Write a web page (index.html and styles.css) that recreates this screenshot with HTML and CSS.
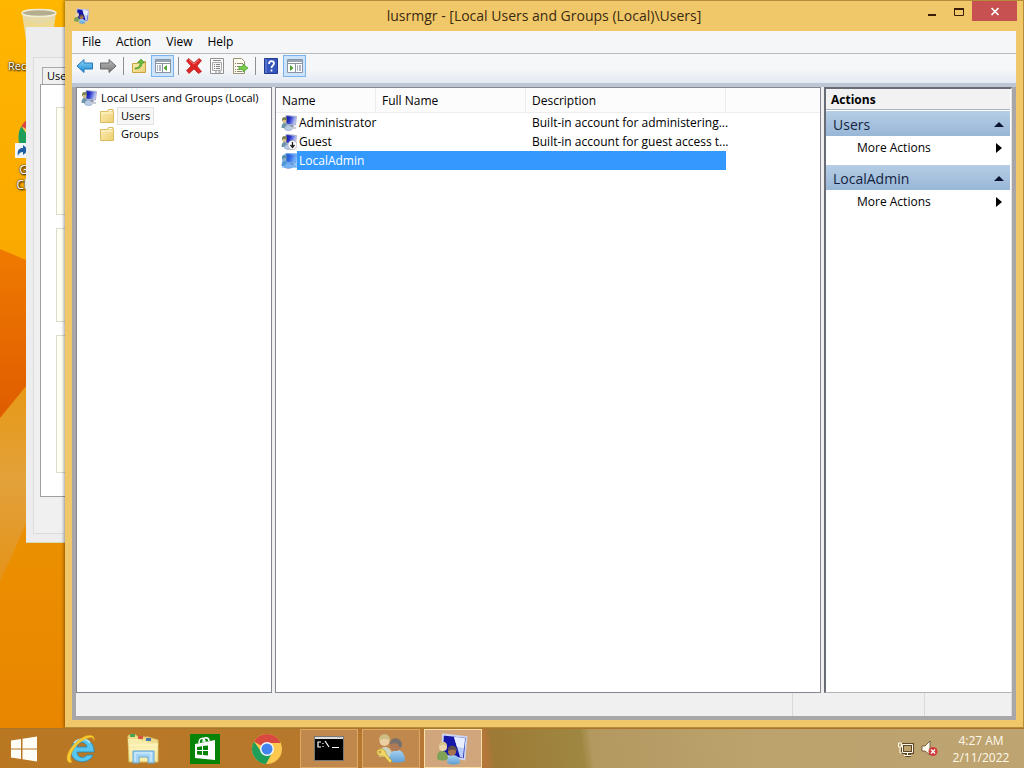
FILE: index.html
```html
<!DOCTYPE html>
<html lang="en">
<head>
<meta charset="utf-8">
<title>lusrmgr - [Local Users and Groups (Local)\Users]</title>
<link rel="stylesheet" href="styles.css">
</head>
<body>
<svg class="defs" aria-hidden="true">
  <defs>
    <linearGradient id="screen" x1="0" x2="1" y1="0" y2="0.3"><stop offset="0" stop-color="#0c0c9c"/><stop offset="0.45" stop-color="#2a35c8"/><stop offset="1" stop-color="#c3d2fa"/></linearGradient>
    <linearGradient id="gold" x1="0" x2="1" y1="0" y2="1"><stop offset="0" stop-color="#fbeeb4"/><stop offset="1" stop-color="#edcf72"/></linearGradient>
    <linearGradient id="shirt" x1="0" x2="0" y1="0" y2="1"><stop offset="0" stop-color="#a9d3f2"/><stop offset="1" stop-color="#5f9fd4"/></linearGradient>
    <linearGradient id="blue" x1="0" x2="0" y1="0" y2="1"><stop offset="0" stop-color="#8fd6f8"/><stop offset="1" stop-color="#1887d2"/></linearGradient>
    <linearGradient id="grey" x1="0" x2="0" y1="0" y2="1"><stop offset="0" stop-color="#bdbdbd"/><stop offset="1" stop-color="#777"/></linearGradient>
    <symbol id="user" viewBox="0 0 16 16">
      <path d="M5 .500 15.500 1.500 14.500 10 5 9Z" fill="url(#screen)" stroke="#a9b0c8"/>
      <path d="M8 10h4l1 2H8Z" fill="#8c93a8"/>
      <circle cx="3.500" cy="4.500" r="2.500" fill="#7a8450"/>
      <path d="M2 5h3v3H2Z" fill="#d8bd8c"/>
      <path d="M.500 13C.500 9 2 8 3.500 8s3.500 2 3.500 5Z" fill="#6f96a8"/>
      <path d="M3.500 14c0-3 2-4 4-4s4 2 4 4c-2 2-6 2-8 0Z" fill="#b7cbe6" stroke="#7c95bd" stroke-width=".6"/>
      <path d="M9 12h6v2H9Z" fill="#c8ccd6"/>
    </symbol>
    <symbol id="group" viewBox="0 0 32 32">
      <path d="M6 1.500 29.500 4 27.500 26.500 5 22Z" fill="#1616a8" stroke="#cdd6f0" stroke-width="1.800"/>
      <path d="M17 4 28 5 26 25 23 24Z" fill="#b9cdfa"/><path d="M17 4 28 5 27 15 20 14Z" fill="#e6eeff"/>
      <path d="M0 26c0-5 1-8 5-8s6 3 6 8c-3 2-8 2-11 0Z" fill="#7fa356"/>
      <circle cx="6" cy="14" r="4" fill="#ecd6ae"/><path d="M2 14c-1-7 9-7 8 0-3-3-5-3-8 0Z" fill="#d5c58c"/>
      <path d="M10 30c0-5 2-8 6-8s7 3 7 8c-4 2-9 2-13 0Z" fill="url(#shirt)"/>
      <circle cx="15" cy="18.500" r="4" fill="#a87350"/><path d="M11 18c-1-7 9-7 9 0-3-2-6-2-9 0Z" fill="#5e5048"/>
    </symbol>
    <symbol id="folder" viewBox="0 0 16 16">
      <path d="M1.500 3.500h7l1-2h4.500v2h.5v11h-13Z" fill="url(#gold)" stroke="#dcbb62"/>
      <path d="M2 5h12" stroke="#fff6cf"/><path d="M10 2.500h3" stroke="#fff"/>
    </symbol>
    <symbol id="chrome" viewBox="0 0 32 32">
      <circle cx="16" cy="16" r="15" fill="#fbc950"/>
      <path d="M16 16 3 8.500A15 15 0 0 1 29 8.500L29 10H16Z" fill="#d9493f"/>
      <path d="M3 8.500A15 15 0 0 0 15 31L21 20Q16 25 11 20Z" fill="#1f9e5a"/>
      <circle cx="16" cy="16" r="7" fill="#f3f6fa"/><circle cx="16" cy="16" r="5.500" fill="#4285ee"/>
    </symbol>
  </defs>
</svg>

<main class="desktop">
  <svg class="wallpaper" viewBox="0 0 1024 768" preserveAspectRatio="none" aria-hidden="true">
    <defs>
      <linearGradient id="sky" x1="0" x2="0" y1="0" y2="1"><stop offset="0" stop-color="#ffb600"/><stop offset=".35" stop-color="#faa800"/><stop offset=".65" stop-color="#eb9200"/><stop offset="1" stop-color="#e88400"/></linearGradient>
      <linearGradient id="fold" x1="0" x2="0" y1="0" y2="1"><stop offset="0" stop-color="#ef7a00"/><stop offset="1" stop-color="#df5c00"/></linearGradient>
      <linearGradient id="ray" x1="0" x2="0" y1="0" y2="1"><stop offset="0" stop-color="#eb9400"/><stop offset=".6" stop-color="#e2a13a"/><stop offset="1" stop-color="#e59319"/></linearGradient>
    </defs>
    <path d="M0 0H1024V768H0Z" fill="url(#sky)"/>
    <path d="M0 418 70 330V425L0 582Z" fill="url(#ray)"/>
    <path d="M0 249 26 260 70 282V332L0 418Z" fill="url(#fold)"/>
  </svg>

  <div class="shortcut shortcut-bin">
    <svg width="40" height="48" viewBox="0 0 40 48" aria-hidden="true"><path d="M3 5 9 46h22l6-41Z" fill="#e6d9a5"/><path d="M5 12 20 16 35 12 31 46H9Z" fill="#f0d98a" opacity=".7"/><ellipse cx="20" cy="5" rx="17" ry="3.500" fill="#b4ad8e" stroke="#efecd8" stroke-width="1.500"/></svg>
    <span>Rec</span>
  </div>
  <div class="shortcut shortcut-chrome">
    <svg width="48" height="48" viewBox="0 0 48 48" aria-hidden="true"><use href="#chrome" x="2" y="1" width="46" height="46"/><path d="M0 30h16v15H0Z" fill="#f2f5f8"/><path d="M3 43c-1-6 1-8 5-8v-3l6 5-6 5v-3c-3 0-4 1-5 4Z" fill="#1e5ea4"/></svg>
    <span>Google Chrome</span>
  </div>

  <section class="back-window" aria-label="System properties">
    <div class="back-body">
      <span class="back-tab">Use</span>
      <div class="back-page">
        <div class="back-box"></div>
        <div class="back-box"></div>
        <div class="back-box back-box-tall"></div>
      </div>
    </div>
  </section>

  <section class="window" aria-label="lusrmgr">
    <header class="titlebar">
      <svg class="title-icon" width="16" height="16" aria-hidden="true"><use href="#group"/></svg>
      <h1 class="title">lusrmgr - [Local Users and Groups (Local)\Users]</h1>
      <div class="controls">
        <button class="control" aria-label="Minimize"><svg width="10" height="10"><path d="M1 7h8v2H1Z" fill="#3b1d0a"/></svg></button>
        <button class="control" aria-label="Maximize"><svg width="12" height="10"><path d="M1.500 1.500h9v7h-9Z" fill="none" stroke="#3b1d0a"/><path d="M1 2h10" stroke="#3b1d0a" stroke-width="2"/></svg></button>
        <button class="control control-close" aria-label="Close"><svg width="10" height="9"><path d="m1.500 1 7 7m0-7-7 7" stroke="#fff" stroke-width="1.700"/></svg></button>
      </div>
    </header>

    <div class="client">
      <nav class="menubar" aria-label="Menu">
        <button>File</button><button>Action</button><button>View</button><button>Help</button>
      </nav>
      <div class="toolbar" role="toolbar" aria-label="Tools">
        <button class="tool" aria-label="Back"><svg width="18" height="16"><path d="M1 8 8 1.500V5h8.500v6H8v3.500Z" fill="url(#blue)" stroke="#2679b8"/></svg></button>
        <button class="tool" aria-label="Forward"><svg width="18" height="16"><path d="M17 8 10 1.500V5H1.500v6H10v3.500Z" fill="url(#grey)" stroke="#686868"/></svg></button>
        <i class="divider"></i>
        <button class="tool" aria-label="Up one level"><svg width="16" height="16"><path d="M1.500 5.500h5l1-2h7v11h-13Z" fill="url(#gold)" stroke="#c9a340"/><path d="M4 10c4 0 5-3 5-5H6.500L10 1l3.500 4H11c0 4-3 6-7 6Z" fill="#69bd3c" stroke="#3d8c24" stroke-width=".6"/></svg></button>
        <button class="tool tool-on" aria-label="Show console tree" aria-pressed="true"><svg width="18" height="16"><path d="M1.500 1.500h15v13h-15Z" fill="#fff" stroke="#8a93a0"/><path d="M2 2h14v2H2Z" fill="#9aa5b4"/><path d="M2 5.500h14M8.500 6v8" stroke="#8a93a0"/><path d="M3 8h4M3 10h4M3 12h4" stroke="#5f6f88" stroke-dasharray="1 1 2"/><path d="M13 7v6l-3.500-3Z" fill="#4aa12f"/></svg></button>
        <i class="divider"></i>
        <button class="tool" aria-label="Delete"><svg width="18" height="18"><path d="M3.500 1.500 9 6l5-4.500 2.500 2L12 9l4.500 5.500-3 2L9 12l-5 4.500-2.500-3L6 9 1.500 4Z" fill="#df2424" stroke="#b51c1c" stroke-width=".7"/><path d="m4 3 5 4 5-4" fill="none" stroke="#f27c74"/></svg></button>
        <button class="tool" aria-label="Properties"><svg width="16" height="16"><path d="M1.500.5h13v15h-13Z" fill="#fff" stroke="#909090"/><path d="M3.500 4.500h9v8h-9Z" fill="#f4f4f4" stroke="#aaa"/><path d="M4 2.500h8M5 6.500h1m1 0h4M5 8.500h1m1 0h4M5 10.500h1m1 0h4M6 14h2m1 0h3" stroke="#858585"/></svg></button>
        <button class="tool" aria-label="Export list"><svg width="17" height="16"><path d="M1.500.5h8l3 3v12h-11Z" fill="#fffdf1" stroke="#9b9473"/><path d="M3 5.500h1m1 0h6M3 8.500h1m1 0h2M3 11.500h1m1 0h2M3 13.500h1m1 0h5" stroke="#8d886a"/><path d="M7 8.500h4V6l5 4-5 4v-2.500H7Z" fill="#79cf4c" stroke="#41962a" stroke-width=".7"/></svg></button>
        <i class="divider"></i>
        <button class="tool" aria-label="Help"><svg width="14" height="16"><path d="M.5.500h13v15H.5Z" fill="#3557bd" stroke="#223a8c"/><path d="M2 1v14" stroke="#7990dc"/><path d="M5 6c0-4 5-3.500 5-.5 0 2-2.500 2-2.500 4.500M7.500 11.500v2" fill="none" stroke="#fff" stroke-width="1.700"/></svg></button>
        <button class="tool tool-on" aria-label="Show action pane" aria-pressed="true"><svg width="18" height="16"><path d="M1.500 1.500h15v13h-15Z" fill="#fff" stroke="#8a93a0"/><path d="M2 2h14v2H2Z" fill="#9aa5b4"/><path d="M2 5.500h14M9.500 6v8" stroke="#8a93a0"/><path d="M11 8h4M11 10h4M11 12h4" stroke="#5f6f88" stroke-dasharray="1 1 2"/><path d="M4 7v6l3.500-3Z" fill="#4aa12f"/></svg></button>
      </div>

      <div class="panes">
        <aside class="pane tree">
          <ul>
            <li class="node"><svg width="16" height="16" aria-hidden="true"><use href="#user"/></svg><span>Local Users and Groups (Local)</span></li>
            <li class="node node-child"><svg width="16" height="16" aria-hidden="true"><use href="#folder"/></svg><span class="node-current">Users</span></li>
            <li class="node node-child"><svg width="16" height="16" aria-hidden="true"><use href="#folder"/></svg><span>Groups</span></li>
          </ul>
        </aside>

        <div class="pane list">
          <table class="users">
            <colgroup><col class="col-name"><col class="col-full"><col class="col-desc"><col></colgroup>
            <thead><tr><th>Name</th><th>Full Name</th><th>Description</th><th class="th-rest"></th></tr></thead>
            <tbody>
              <tr><td class="name-cell"><div class="name"><svg width="16" height="16" aria-hidden="true"><use href="#user"/></svg><span>Administrator</span></div></td><td></td><td>Built-in account for administering...</td><td></td></tr>
              <tr><td class="name-cell"><div class="name"><svg width="16" height="16" aria-hidden="true"><use href="#user"/><circle cx="11.500" cy="11" r="4.500" fill="#fff" stroke="#9a9a9a" stroke-width=".6"/><path d="M11.500 8v5M9.500 11l2 2.500 2-2.500" fill="none" stroke="#222" stroke-width="1.300"/></svg><span>Guest</span></div></td><td></td><td>Built-in account for guest access t...</td><td></td></tr>
              <tr class="selected"><td class="name-cell"><div class="name"><svg width="16" height="16" aria-hidden="true"><use href="#user"/><path d="M5 0h11v15H1V3Z" fill="#3399ff" opacity=".5"/></svg><span>LocalAdmin</span></div></td><td></td><td></td><td></td></tr>
            </tbody>
          </table>
        </div>

        <aside class="actions">
          <h2 class="actions-title">Actions</h2>
          <h3 class="action-group">Users<svg width="10" height="6" aria-hidden="true"><path d="M0 5h10L5 0Z" fill="#0a1430"/></svg></h3>
          <button class="action">More Actions<svg width="6" height="10" aria-hidden="true"><path d="M0 0v10l6-5Z"/></svg></button>
          <h3 class="action-group">LocalAdmin<svg width="10" height="6" aria-hidden="true"><path d="M0 5h10L5 0Z" fill="#0a1430"/></svg></h3>
          <button class="action">More Actions<svg width="6" height="10" aria-hidden="true"><path d="M0 0v10l6-5Z"/></svg></button>
        </aside>
      </div>
      <footer class="status"><div class="status-main"></div><div class="status-mid"></div><div class="status-end"></div></footer>
    </div>
  </section>

  <footer class="taskbar">
    <button class="start" aria-label="Start"><svg width="28" height="26"><path d="M1 4.500 11 3v9.500H1ZM12.500 2.700 27 .5v12H12.500ZM1 13.500h10V23L1 21.500ZM12.500 13.500H27v12l-14.500-2.200Z" fill="#fffef6"/></svg></button>
    <button class="task" aria-label="Internet Explorer"><svg width="32" height="32"><path d="M29 19H12c0 6 7 7 10 3h6c-4 10-22 9-22-4C6 2 30 2 29 19ZM12 14h10c-1-6-9-6-10 0Z" fill="#59c6ee" stroke="#2189bd" stroke-width=".8" fill-rule="evenodd"/><path d="M9 10c4-5 13-5 16 0" fill="none" stroke="#b5ecfb" stroke-width="1.500"/><path d="M5 30C-2 27 4 14 14 7 21 1 31 0 29 8c0-5-6-4-12 0C8 14 3 24 7 29Z" fill="#f9ce35" stroke="#d89e19" stroke-width=".6"/></svg></button>
    <button class="task" aria-label="File Explorer"><svg width="32" height="32"><path d="M1 4c0-3 5-3 8-2l2 2h10l10 3v22H2Z" fill="#efdc89" stroke="#dac169"/><path d="M3 1h5v3H3Z" fill="#49a455"/><path d="M11 3h5v3h-5Z" fill="#d75442"/><path d="M19 5h5v3h-5Z" fill="#4b79ae"/><path d="M1 6h11l2 2h6l2 2h9l-1 18H3Z" fill="#f8edab"/><path d="M3 12h27M3 16h27" stroke="#fff7c9"/><path d="M6 18h21v12h-6v-6h-9v6H6Z" fill="#a5d5f4" stroke="#64a5d3"/><path d="M8 20h17M8 20v8m16-8v8" stroke="#dff3fd"/></svg></button>
    <button class="task" aria-label="Store"><svg width="30" height="30"><path d="M0 0h30v30H0Z" fill="#078307"/><path d="M5 10 25 6v20L5 24Z" fill="#fff"/><path d="M9 9c0-6 6-6 6-1m-2 0c0-6 6-5 6-1" fill="none" stroke="#fff" stroke-width="1.500"/><path d="m7 13 5-.7V16H7Zm6-.9 5-.7V16h-5ZM7 17h5v4l-5-.6Zm6 0h5v4.600l-5-.5Z" fill="#078307"/></svg></button>
    <button class="task" aria-label="Google Chrome"><svg width="32" height="32"><use href="#chrome"/></svg></button>
    <button class="task task-open" aria-label="Command Prompt"><svg width="30" height="25"><path d="M.5.500h29v24H.5Z" fill="#000" stroke="#777"/><path d="M1 1h28v2H1Z" fill="#ddd"/><path d="M23 1h1m1 0h1m1 0h1" stroke="#888"/><path d="M7 6H4v5h3M9 7v1m0 2v1M11 5l4 6M18 11.500h7" fill="none" stroke="#fff" stroke-width="1.200"/></svg></button>
    <button class="task task-open" aria-label="User Accounts"><svg width="32" height="32"><path d="M4 24c0-6 2-10 6-10s7 3 8 10Z" fill="#c9d3c4"/><circle cx="9.500" cy="8" r="5" fill="#ecd0a4"/><path d="M4 8c-1-9 12-9 11 0-4-3-7-3-11 0Z" fill="#cdbc84"/><path d="M14 28c0-7 3-11 8-11s8 4 8 11c-5 2-11 2-16 0Z" fill="url(#shirt)"/><circle cx="20.500" cy="12.500" r="5.500" fill="#b07a56"/><path d="M15 12c-1-9 12-9 12 0-1 4-3 3-4-1-3-1-6-1-8 1Z" fill="#77706c"/><path d="M2 18c2-4 9-2 9 3l6 7-2 2-6-7c-5 1-8-2-7-5Zm2 0v2h2v-2Z" fill="#f5d968" stroke="#b99a33" stroke-width=".8" fill-rule="evenodd"/></svg></button>
    <button class="task task-open task-active" aria-label="lusrmgr"><svg width="32" height="32"><use href="#group"/></svg></button>
    <div class="tray">
      <svg width="17" height="16" role="img" aria-label="Network"><path d="M5.500 3.500h10v8H5.500ZM8 14.500h6M10.500 12v2" fill="none" stroke="#5d4827" stroke-width="3"/><path d="M5.500 3.500h10v8H5.500ZM7 14.500h7M10.500 12v2M1.500 2v4h3V2ZM3 6v6h2" fill="none" stroke="#fff8e8"/></svg>
      <svg width="17" height="17" role="img" aria-label="Volume muted"><path d="M1 6h3l5-5v14l-5-4H1Z" fill="#fff9ec" stroke="#4c3a1d" stroke-width=".7"/><circle cx="12" cy="11.500" r="4.500" fill="#d03d3d"/><path d="m10 9.500 4 4m0-4-4 4" stroke="#fff" stroke-width="1.300"/></svg>
      <time class="clock" datetime="2022-02-11T04:27"><span>4:27 AM</span><span>2/11/2022</span></time>
    </div>
  </footer>
</main>
</body>
</html>
```

FILE: styles.css
```css
* { box-sizing: border-box; }

body {
  margin: 0;
  font-family: "Open Sans", "Noto Sans", sans-serif;
  font-size: 12px;
  line-height: 16px;
  color: #000;
}

button {
  margin: 0;
  padding: 0;
  border: 0;
  background: none;
  color: inherit;
  font: inherit;
}

h1, h2, h3, ul { margin: 0; padding: 0; font-weight: 400; }
ul { list-style: none; }
svg { display: block; flex: none; }
.defs { position: absolute; width: 0; height: 0; }

.desktop {
  position: relative;
  display: flex;
  flex-direction: column;
  justify-content: flex-end;
  height: 100vh;
  overflow: hidden;
}

.wallpaper { position: absolute; inset: 0; width: 100%; height: 100%; }

/* Desktop shortcuts */
.shortcut {
  position: absolute;
  left: 0;
  width: 78px;
  display: flex;
  flex-direction: column;
  align-items: center;
  gap: 1px;
  color: #fff;
  text-align: center;
  text-shadow: 1px 1px 2px #000, 0 0 2px #000;
}
.shortcut-bin { top: 8px; gap: 2px; }
.shortcut-bin span { align-self: flex-start; padding-left: 8px; font-size: 11px; }
.shortcut-chrome { top: 113px; }
.shortcut-chrome span { width: 50px; line-height: 15px; }

/* Window behind */
.back-window {
  position: absolute;
  left: 26px;
  top: 27px;
  width: 400px;
  height: 516px;
  padding: 30px 7px 8px;
  background: #ededed;
  border-bottom: 1px solid #d9d9b8;
}
.back-body {
  height: 100%;
  padding: 9px 6px 36px;
  background: #f0f0f0;
  border: 1px solid #dcdcdc;
  display: flex;
  flex-direction: column;
}
.back-tab {
  align-self: flex-start;
  margin-left: 2px;
  padding: 0 20px 0 4px;
  border: 1px solid #aaa;
  border-bottom: 0;
  font-size: 11px;
}
.back-page {
  flex: 1;
  display: flex;
  flex-direction: column;
  gap: 13px;
  padding: 22px 15px 23px;
  background: #fff;
  border: 1px solid #a0a0a0;
}
.back-box { flex: 107 1 0; border: 1px solid #dcdccc; background: #fffff2; }
.back-box:nth-child(2) { flex-grow: 93; }
.back-box-tall { flex-grow: 137; }

/* Main window */
.window {
  position: absolute;
  inset: 0 0 40px 65px;
  display: flex;
  flex-direction: column;
  padding: 0 7px 7px;
  background: #f0c869;
  border: 1px solid #b58c38;
  border-width: 1px 1px 1px 0;
  box-shadow: -1px 0 3px #0006;
}
.titlebar {
  display: flex;
  align-items: flex-start;
  height: 30px;
  margin-right: -1px;
  padding-left: 2px;
}
.title-icon { margin-top: 7px; }
.title {
  flex: 1;
  padding-left: 80px;
  font-size: 14px;
  line-height: 30px;
  text-align: center;
  color: #3b2a12;
}
.controls { display: flex; }
.control {
  display: flex;
  align-items: center;
  justify-content: center;
  width: 27px;
  height: 21px;
}
.control-close { width: 45px; height: 20px; background: #c75050; }

.client {
  flex: 1;
  display: flex;
  flex-direction: column;
  min-height: 0;
  background: #f0f0f0;
  border: solid #a9a6aa;
  border-width: 0 4px 4px;
}
.menubar {
  display: flex;
  gap: 15px;
  height: 23px;
  margin: 0 -4px;
  padding: 0 10px;
  background: #f5f6f7;
  border-bottom: 1px solid #b4bcc4;
}
.toolbar {
  display: flex;
  align-items: center;
  gap: 1px;
  height: 29px;
  margin: 0 -4px;
  padding: 0 2px 5px;
  background: linear-gradient(#f6f7f8 50%, #e3eaf3);
}
.tool {
  display: flex;
  align-items: center;
  justify-content: center;
  width: 22px;
  height: 22px;
}
.tool-on { width: 23px; background: #cce4fb; border: 1px solid #7cb3ea; }
.divider { width: 1px; height: 18px; margin: 0 3px; background: #8d9095; }

.panes {
  flex: 1;
  display: flex;
  gap: 3px;
  min-height: 0;
  margin: 0 -4px;
  padding: 4px 4px 0;
  background: linear-gradient(#bcc6d4 4px, transparent 4px);
}
.pane { background: #fff; border: 1px solid #828790; }
.tree { width: 196px; padding: 1px 4px; overflow: hidden; }
.node {
  display: flex;
  align-items: center;
  gap: 3px;
  height: 18px;
  white-space: nowrap;
  font-size: 11px;
}
.node span { padding: 0 1px; }
.node-child { padding-left: 18px; gap: 2px; }
.node-child span { padding: 0 3px; border: 1px solid transparent; }
.node-child .node-current { background: #f7f7f7; border-color: #e2e2e2; }

.list { flex: 1; min-width: 0; }
.users { width: 100%; table-layout: fixed; border-spacing: 0; }
.col-name { width: 100px; }
.col-full { width: 150px; }
.col-desc { width: 200px; }
.users th {
  height: 25px;
  padding: 2px 0 0 6px;
  border-right: 1px solid #ececec;
  border-bottom: 1px solid #eee;
  background: #fcfcfc;
  font-weight: 400;
  text-align: left;
}
.users .th-rest { border-right: 0; }
.users td { height: 19px; padding: 0 0 0 6px; line-height: 19px; white-space: nowrap; }
.users .name-cell { padding: 0 0 0 5px; }
.name { display: flex; align-items: center; }
.name span { flex: 1; padding-left: 2px; }
.selected { color: #fff; }
.selected .name span, .selected td:nth-child(2), .selected td:nth-child(3) { background: #3399ff; }

.actions {
  width: 188px;
  padding-right: 1px;
  background: #fff;
  border: solid #686c74;
  border-width: 2px 1px 1px 2px;
  border-right-color: #e3e3e3;
  border-bottom-color: #b4b4b4;
}
.actions-title {
  height: 22px;
  padding-left: 5px;
  background: linear-gradient(#f2f2f2 20px, #a8b4c2 20px, #a8b4c2 21px, #fff 21px);
  font-size: 12px;
  line-height: 22px;
  font-weight: 700;
}
.action-group {
  display: flex;
  align-items: center;
  justify-content: space-between;
  height: 25px;
  padding: 2px 6px 0 7px;
  background: linear-gradient(#b6cee6, #98b6d6);
  font-size: 14px;
  color: #14233f;
}
.action {
  display: flex;
  align-items: center;
  justify-content: space-between;
  width: 100%;
  height: 29px;
  padding: 0 8px 5px 31px;
}

.status { display: flex; height: 23px; }
.status div { border-right: 1px solid #d9d9d9; }
.status-main { flex: 1; }
.status-mid { width: 132px; }
.status-end { width: 87px; }

/* Taskbar */
.taskbar {
  position: relative;
  display: flex;
  gap: 4px;
  height: 40px;
  background: linear-gradient(83deg, #b97722 0, #b6782b 300px, #b5763a 484px, #9d7a35 492px, #9f8741 580px, #b39960 590px, #bca26c 760px, #bda471 100%);
  border-top: 1px solid #a8752a;
}
.start, .task { display: flex; align-items: center; justify-content: center; }
.start { width: 48px; }
.task { width: 58px; border: 1px solid transparent; }
.task-open { background: #c0884c; border-color: #dba964; }
.task-active { background: #d2a67c; border-color: #f7dfa6; }
.tray {
  display: flex;
  align-items: center;
  gap: 7px;
  margin-left: auto;
  padding-right: 16px;
  color: #fff8ea;
}
.clock {
  display: flex;
  flex-direction: column;
  width: 54px;
  margin-left: 9px;
  align-items: center;
  line-height: 17px;
}
```
